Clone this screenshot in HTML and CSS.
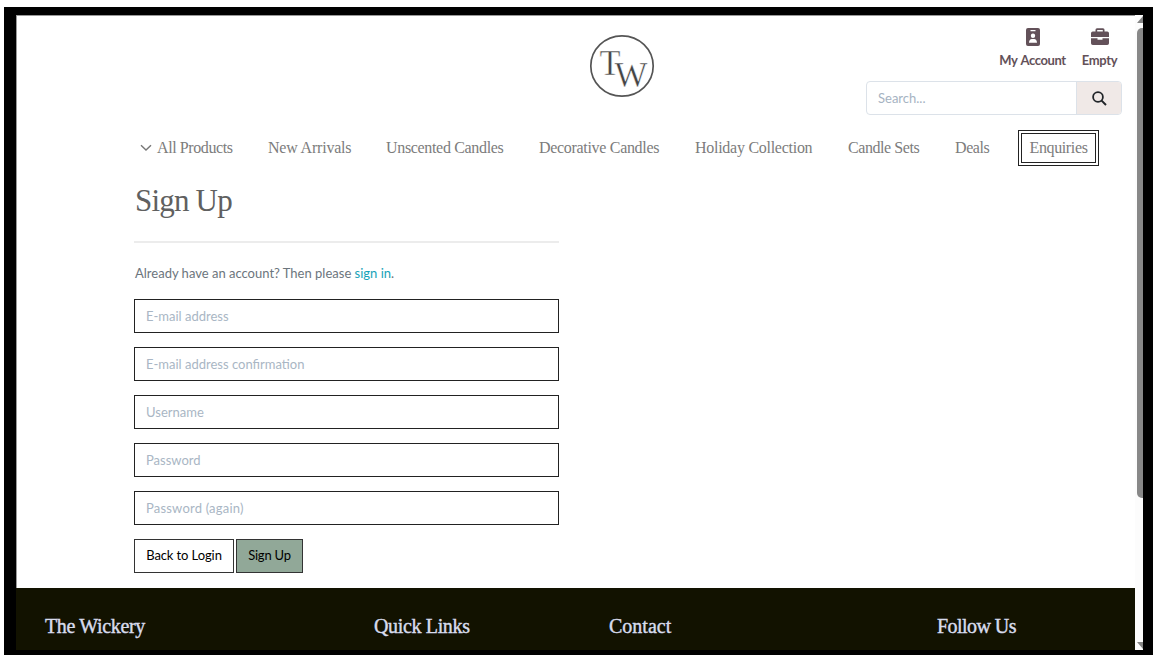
FILE: index.html
```html
<!DOCTYPE html>
<html lang="en">
<head>
<meta charset="utf-8">
<title>The Wickery - Sign Up</title>
<link rel="stylesheet" href="styles.css">
</head>
<body>
<div class="frame">
  <div class="page">
    <header class="header">
      <a class="logo">
        <svg width="66" height="66" viewBox="0 0 66 66">
          <ellipse cx="33" cy="33" rx="31.2" ry="30.2" fill="none" stroke="#555" stroke-width="1.7"/>
          <text class="logo-letter" x="10.5" y="41.5" font-size="36" textLength="21" lengthAdjust="spacingAndGlyphs">T</text>
          <text class="logo-letter" x="25.500" y="54" font-size="36" textLength="33" lengthAdjust="spacingAndGlyphs">W</text>
        </svg>
      </a>
      <div class="tools">
        <div class="links">
          <a class="tool account">
            <svg width="14" height="18" viewBox="0 0 14 18"><path fill="#635159" fill-rule="evenodd" d="M2 0h10a2 2 0 0 1 2 2v14a2 2 0 0 1-2 2H2a2 2 0 0 1-2-2V2a2 2 0 0 1 2-2zM4.500 2v1.200h5V2zM7 5.500a2.200 2.200 0 1 0 0 4.400 2.200 2.200 0 0 0 0-4.400zM3 14.800h8c0-2.300-1.200-3.800-2.900-3.800H5.900C4.200 11 3 12.500 3 14.800z"/></svg>
            <span>My Account</span>
          </a>
          <a class="tool bag">
            <svg width="18" height="18" viewBox="0 0 18 18"><path fill="#635159" fill-rule="evenodd" d="M4.500 3.500V1.800Q4.500.3 6 .3h6q1.500 0 1.500 1.500v1.700h2.700A1.800 1.800 0 0 1 18 5.300V9H0V5.300a1.800 1.800 0 0 1 1.800-1.800zM6.200 3.500h5.600V2H6.200zM0 10.200h6.500v1.600h5v-1.600H18v5.100a1.800 1.800 0 0 1-1.800 1.800H1.800A1.800 1.800 0 0 1 0 15.300z"/></svg>
            <span>Empty</span>
          </a>
        </div>
        <form class="search">
          <span class="search-text">Search...</span>
          <span class="search-button"><svg width="15" height="15" viewBox="0 0 15 15" fill="none" stroke="#212529" stroke-width="1.8"><circle cx="6" cy="6" r="4.900"/><path d="M9.600 9.600l4.400 4.400" stroke-width="2"/></svg></span>
        </form>
      </div>
    </header>
    <nav class="nav">
      <a class="n1"><svg class="chevron" width="12" height="8" viewBox="0 0 12 8"><path d="M1 1.300l5 4.800 5-4.800" fill="none" stroke="#777" stroke-width="1.400"/></svg><span>All Products</span></a>
      <a class="n2">New Arrivals</a>
      <a class="n3">Unscented Candles</a>
      <a class="n4">Decorative Candles</a>
      <a class="n5">Holiday Collection</a>
      <a class="n6">Candle Sets</a>
      <a class="n7">Deals</a>
      <a class="enquiries">Enquiries</a>
    </nav>
    <main class="main">
      <h1>Sign Up</h1>
      <hr>
      <p class="hint">Already have an account? Then please <a>sign in</a>.</p>
      <div class="fields">
        <div class="field"><span>E-mail address</span></div>
        <div class="field"><span>E-mail address confirmation</span></div>
        <div class="field"><span>Username</span></div>
        <div class="field"><span>Password</span></div>
        <div class="field again"><span>Password (again)</span></div>
      </div>
      <div class="actions">
        <a class="button back"><span>Back to Login</span></a>
        <a class="button signup"><span>Sign Up</span></a>
      </div>
    </main>
    <footer class="footer">
      <h2 class="h-brand">The Wickery</h2>
      <h2 class="h-links">Quick Links</h2>
      <h2 class="h-contact">Contact</h2>
      <h2 class="h-follow">Follow Us</h2>
    </footer>
  </div>
  <div class="scrollbar">
    <svg width="6" height="7" viewBox="0 0 6 7"><path d="M6 0L0 7h6z" fill="#858585"/></svg>
    <div class="thumb"></div>
    <svg class="down" width="6" height="7" viewBox="0 0 6 7"><path d="M0 0h6v7z" fill="#858585"/></svg>
  </div>
</div>
</body>
</html>
```

FILE: styles.css
```css
* { box-sizing: border-box; }
body {
  margin: 0;
  padding: 7px 8px 5px 4px;
  height: 660px;
  overflow: hidden;
  background: #fff;
  font-family: Lato, sans-serif;
  font-size: 13px;
}
h1, h2, p { margin: 0; font-weight: 400; white-space: nowrap; }
.frame {
  display: flex;
  height: 648px;
  padding: 8px 10px 5px 12px;
  background: #000;
}
.page {
  display: flex;
  flex-direction: column;
  width: 1119px;
  background: #fff;
  border-top: 1px solid #999;
  border-left: 1px solid #999;
}
.header {
  display: flex;
  justify-content: space-between;
  height: 114px;
  padding: 0 13px 0 572px;
}
.logo { display: block; padding-top: 17px; height: 84px; }
.logo-letter { font-family: "Liberation Serif", serif; fill: #444; stroke: #fff; stroke-width: .5px; }
.tools { width: 256px; padding-top: 12px; }
.links { display: flex; justify-content: flex-end; gap: 17px; padding-right: 5px; height: 53px; }
.tool {
  display: flex;
  flex-direction: column;
  align-items: center;
  gap: 6px;
  color: #635159;
  font-weight: 700;
  line-height: 17px;
  white-space: nowrap;
}
.account { width: 65px; letter-spacing: -.4px; word-spacing: 1px; }
.bag { width: 35px; letter-spacing: -.3px; }
.search {
  display: flex;
  height: 34px;
  border: 1px solid #dce2e9;
  border-radius: 4px;
  overflow: hidden;
}
.search-text { flex: 1; padding-left: 11px; line-height: 33px; color: #a6b3c2; }
.search-button {
  display: flex;
  align-items: center;
  justify-content: center;
  width: 45px;
  background: #f0e9e7;
  border-left: 1px solid #dce2e9;
}
.nav {
  display: grid;
  grid-template-columns: 128px 118px 153px 156px 153px 107px 63px 81px;
  height: 36px;
  padding-left: 123px;
  line-height: 35px;
  font-family: "Liberation Serif", serif;
  font-size: 16px;
  color: #7c7c7c;
  white-space: nowrap;
}
.chevron { margin-right: 5px; vertical-align: 1px; }
.n1 { letter-spacing: -.4px; }
.n2 { letter-spacing: -.2px; }
.n3 { letter-spacing: -.33px; }
.n4 { letter-spacing: -.31px; }
.n5 { letter-spacing: -.27px; }
.n6 { letter-spacing: -.43px; }
.n7 { letter-spacing: -.4px; }
.enquiries { border: 4px double #222; height: 36px; line-height: 27px; text-align: center; letter-spacing: -.37px; }
.main { width: 543px; height: 422px; padding-left: 117px; }
h1 {
  height: 75px;
  padding-left: 1px;
  font-family: "Liberation Serif", serif;
  font-size: 31px;
  line-height: 70px;
  letter-spacing: -.8px;
  color: #606060;
}
hr { width: 425px; margin: 0; border: 0; border-top: 2px solid #ececec; }
.hint { height: 56px; padding-left: 1px; line-height: 61px; color: #6c757d; }
.hint a { color: #17a2b8; }
.fields { display: flex; flex-direction: column; gap: 14px; width: 425px; }
.field {
  height: 34px;
  padding-left: 11px;
  border: 1px solid #222;
  line-height: 33px;
  color: #a9b6c4;
}
.again { letter-spacing: .2px; }
.actions { display: flex; gap: 2px; padding-top: 14px; }
.button { height: 34px; border: 1px solid #333; line-height: 31px; text-align: center; color: #000; white-space: nowrap; }
.back { width: 100px; letter-spacing: -.1px; }
.signup { width: 67px; letter-spacing: -.2px; background: #91a898; }
.footer {
  display: grid;
  grid-template-columns: 329px 235px 328px 1fr;
  flex: 1;
  padding-left: 29px;
  margin-left: -1px;
  background: #121200;
  color: #d8dced;
}
.footer h2 {
  font-family: "Liberation Serif", serif;
  font-size: 20px;
  line-height: 76px;
  height: 61px;
  -webkit-text-stroke: .4px #d8dced;
}
.h-brand, .h-links { letter-spacing: -.35px; }
.h-follow { letter-spacing: -.55px; }
.scrollbar { display: flex; flex-direction: column; width: 8px; padding: 1px 0 1px 2px; background: #fcfcfc; }
.scrollbar svg { display: block; }
.thumb { width: 6px; height: 470px; margin-top: 5px; border-radius: 5px 0 0 5px; background: #888; }
.down { margin-top: auto; }
```
